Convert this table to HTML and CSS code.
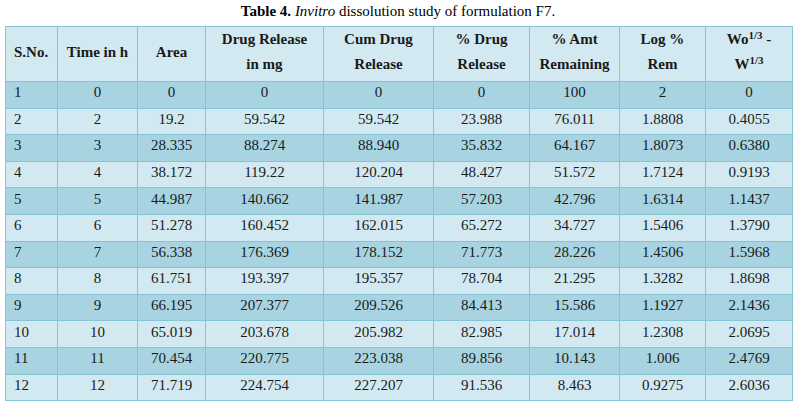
FILE: index.html
```html
<!DOCTYPE html>
<html>
<head>
<meta charset="utf-8">
<link rel="stylesheet" href="styles.css">
</head>
<body>
<div class="caption"><b>Table 4.</b> <i>Invitro</i> dissolution study of formulation F7.</div>
<table class="data">
<colgroup>
<col class="c1"><col class="c2"><col class="c3"><col class="c4"><col class="c5"><col class="c6"><col class="c7"><col class="c8"><col class="c9">
</colgroup>
<thead>
<tr>
<th>S.No.</th><th>Time in h</th><th>Area</th><th>Drug Release<br>in mg</th><th>Cum Drug<br>Release</th><th>% Drug<br>Release</th><th>% Amt<br>Remaining</th><th>Log %<br>Rem</th><th>Wo<sup>1/3</sup> -<br>W<sup>1/3</sup></th>
</tr>
</thead>
<tbody>
<tr class="dark"><td>1</td><td>0</td><td>0</td><td>0</td><td>0</td><td>0</td><td>100</td><td>2</td><td>0</td></tr>
<tr class="light"><td>2</td><td>2</td><td>19.2</td><td>59.542</td><td>59.542</td><td>23.988</td><td>76.011</td><td>1.8808</td><td>0.4055</td></tr>
<tr class="dark"><td>3</td><td>3</td><td>28.335</td><td>88.274</td><td>88.940</td><td>35.832</td><td>64.167</td><td>1.8073</td><td>0.6380</td></tr>
<tr class="light"><td>4</td><td>4</td><td>38.172</td><td>119.22</td><td>120.204</td><td>48.427</td><td>51.572</td><td>1.7124</td><td>0.9193</td></tr>
<tr class="dark"><td>5</td><td>5</td><td>44.987</td><td>140.662</td><td>141.987</td><td>57.203</td><td>42.796</td><td>1.6314</td><td>1.1437</td></tr>
<tr class="light"><td>6</td><td>6</td><td>51.278</td><td>160.452</td><td>162.015</td><td>65.272</td><td>34.727</td><td>1.5406</td><td>1.3790</td></tr>
<tr class="dark"><td>7</td><td>7</td><td>56.338</td><td>176.369</td><td>178.152</td><td>71.773</td><td>28.226</td><td>1.4506</td><td>1.5968</td></tr>
<tr class="light"><td>8</td><td>8</td><td>61.751</td><td>193.397</td><td>195.357</td><td>78.704</td><td>21.295</td><td>1.3282</td><td>1.8698</td></tr>
<tr class="dark"><td>9</td><td>9</td><td>66.195</td><td>207.377</td><td>209.526</td><td>84.413</td><td>15.586</td><td>1.1927</td><td>2.1436</td></tr>
<tr class="light"><td>10</td><td>10</td><td>65.019</td><td>203.678</td><td>205.982</td><td>82.985</td><td>17.014</td><td>1.2308</td><td>2.0695</td></tr>
<tr class="dark"><td>11</td><td>11</td><td>70.454</td><td>220.775</td><td>223.038</td><td>89.856</td><td>10.143</td><td>1.006</td><td>2.4769</td></tr>
<tr class="light"><td>12</td><td>12</td><td>71.719</td><td>224.754</td><td>227.207</td><td>91.536</td><td>8.463</td><td>0.9275</td><td>2.6036</td></tr>
</tbody>
</table>
</body>
</html>
```
FILE: styles.css
```css
html, body {
  margin: 0;
  padding: 0;
  background: #ffffff;
}
body {
  font-family: "Liberation Serif", "Times New Roman", serif;
  color: #1a1a1a;
  padding: 2px 0 0 5px;
}
.caption {
  width: 786px;
  text-align: center;
  font-size: 15px;
  line-height: 18px;
  height: 24px;
  color: #000;
}
.data {
  border-collapse: collapse;
  table-layout: fixed;
  width: 787px;
  font-size: 15px;
}
.c1 { width: 52px; }
.c2 { width: 80px; }
.c3 { width: 68px; }
.c4 { width: 118px; }
.c5 { width: 110px; }
.c6 { width: 96px; }
.c7 { width: 90px; }
.c8 { width: 86px; }
.c9 { width: 87px; }
.data th,
.data td {
  border: 1px solid #85c4d7;
  text-align: center;
  padding: 0 4px;
}
.data thead tr {
  height: 52px;
}
.data th {
  background: #d3e9f1;
  font-weight: bold;
  line-height: 25px;
  padding-top: 0;
  padding-bottom: 4px;
  vertical-align: middle;
}
.data th:first-child,
.data td:first-child {
  text-align: left;
  padding-left: 8px;
}
.data sup {
  font-size: 11px;
  line-height: 0;
  vertical-align: 5px;
}
.data tbody tr {
  height: 26.6px;
}
.data td {
  line-height: 18px;
  padding-top: 0;
  padding-bottom: 5px;
  vertical-align: middle;
}
.data tr.dark td {
  background: #a8d4e2;
}
.data tr.light td {
  background: #d3e9f1;
}
```
